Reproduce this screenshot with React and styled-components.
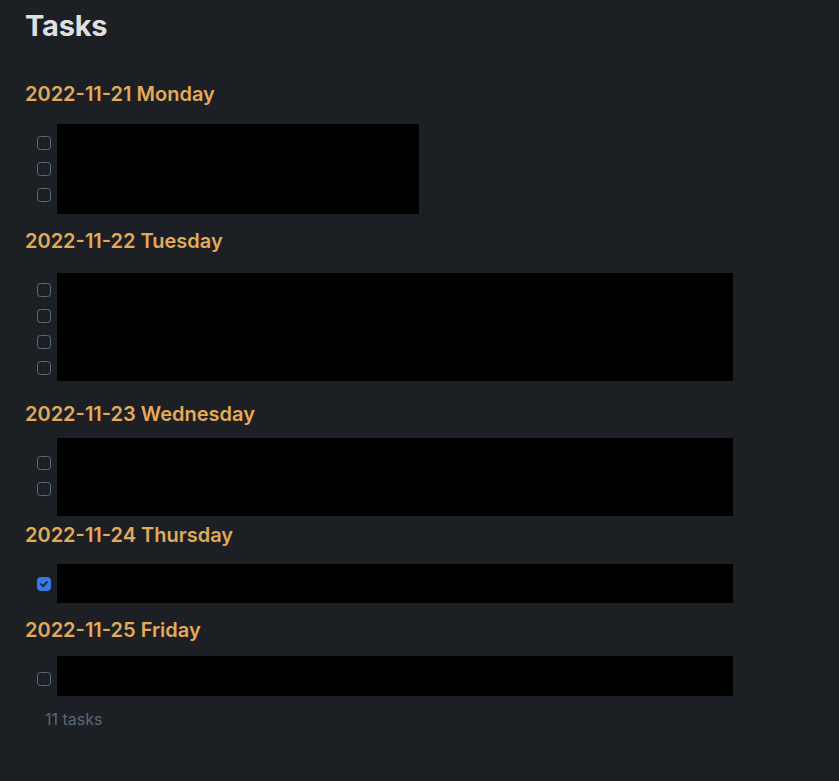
import styled, { createGlobalStyle } from 'styled-components';

const GlobalStyle = createGlobalStyle`
  html, body {
    margin: 0;
    padding: 0;
    background: #1c1f24;
  }
  body {
    font-family: Inter, "Noto Sans", sans-serif;
    -webkit-font-smoothing: antialiased;
  }
`;

const Page = styled.main`
  min-height: 781px;
  padding: 8px 25px 0;
  box-sizing: border-box;
  background: #1c1f24;
`;

const Title = styled.h1`
  margin: 0;
  font-size: 29px;
  line-height: 36px;
  font-weight: 700;
  color: #dfdfe0;
  letter-spacing: -0.2px;
`;

const Section = styled.section`
  margin-top: ${(props) => props.$gap}px;
`;

const DayHeading = styled.h2`
  margin: 0;
  font-size: 20px;
  line-height: 24px;
  font-weight: 600;
  color: #e3aa59;
`;

const TaskList = styled.ul`
  position: relative;
  list-style: none;
  margin: 24px 0 0;
  padding: 0 0 0 12px;
`;

const TaskRow = styled.li`
  display: flex;
  align-items: center;
  height: 26px;
`;

const Box = styled.span`
  display: inline-flex;
  align-items: center;
  justify-content: center;
  width: 14px;
  height: 14px;
  box-sizing: border-box;
  border-radius: 3.5px;
  border: 1px solid ${(props) => (props.$checked ? '#3a78e6' : '#5f6a77')};
  background: ${(props) => (props.$checked ? '#3a78e6' : 'transparent')};
`;

/* redaction block laid over the task texts */
const Redacted = styled.div`
  position: absolute;
  left: 32px;
  background: #000;
`;

const Footer = styled.div`
  margin: 17px 0 0 20px;
  font-size: 16px;
  line-height: 20px;
  color: #5d6875;
`;

function Checkbox({ checked }) {
  return (
    <Box $checked={checked}>
      {checked && (
        <svg width="10" height="10" viewBox="0 0 10 10">
          <path
            d="M2 5.2 L4.1 7.2 L8 3"
            fill="none"
            stroke="#1c1f24"
            strokeWidth="1.7"
            strokeLinecap="round"
            strokeLinejoin="round"
          />
        </svg>
      )}
    </Box>
  );
}

const days = [
  { title: '2022-11-21 Monday', tasks: [false, false, false], gap: 38, cover: { top: -6, height: 90, width: 362 } },
  { title: '2022-11-22 Tuesday', tasks: [false, false, false, false], gap: 21, cover: { top: -4, height: 108, width: 676 } },
  { title: '2022-11-23 Wednesday', tasks: [false, false], gap: 21, cover: { top: -12, height: 78, width: 676 } },
  { title: '2022-11-24 Thursday', tasks: [true], gap: 21, cover: { top: -7, height: 39, width: 676 } },
  { title: '2022-11-25 Friday', tasks: [false], gap: 21, cover: { top: -10, height: 40, width: 676 } },
];

export default function App() {
  return (
    <>
      <GlobalStyle />
      <Page>
        <Title>Tasks</Title>
        {days.map((day) => (
          <Section key={day.title} $gap={day.gap}>
            <DayHeading>{day.title}</DayHeading>
            <TaskList>
              {day.tasks.map((checked, i) => (
                <TaskRow key={i}>
                  <Checkbox checked={checked} />
                </TaskRow>
              ))}
              <Redacted
                style={{ top: day.cover.top, height: day.cover.height, width: day.cover.width }}
              />
            </TaskList>
          </Section>
        ))}
        <Footer>11 tasks</Footer>
      </Page>
    </>
  );
}
